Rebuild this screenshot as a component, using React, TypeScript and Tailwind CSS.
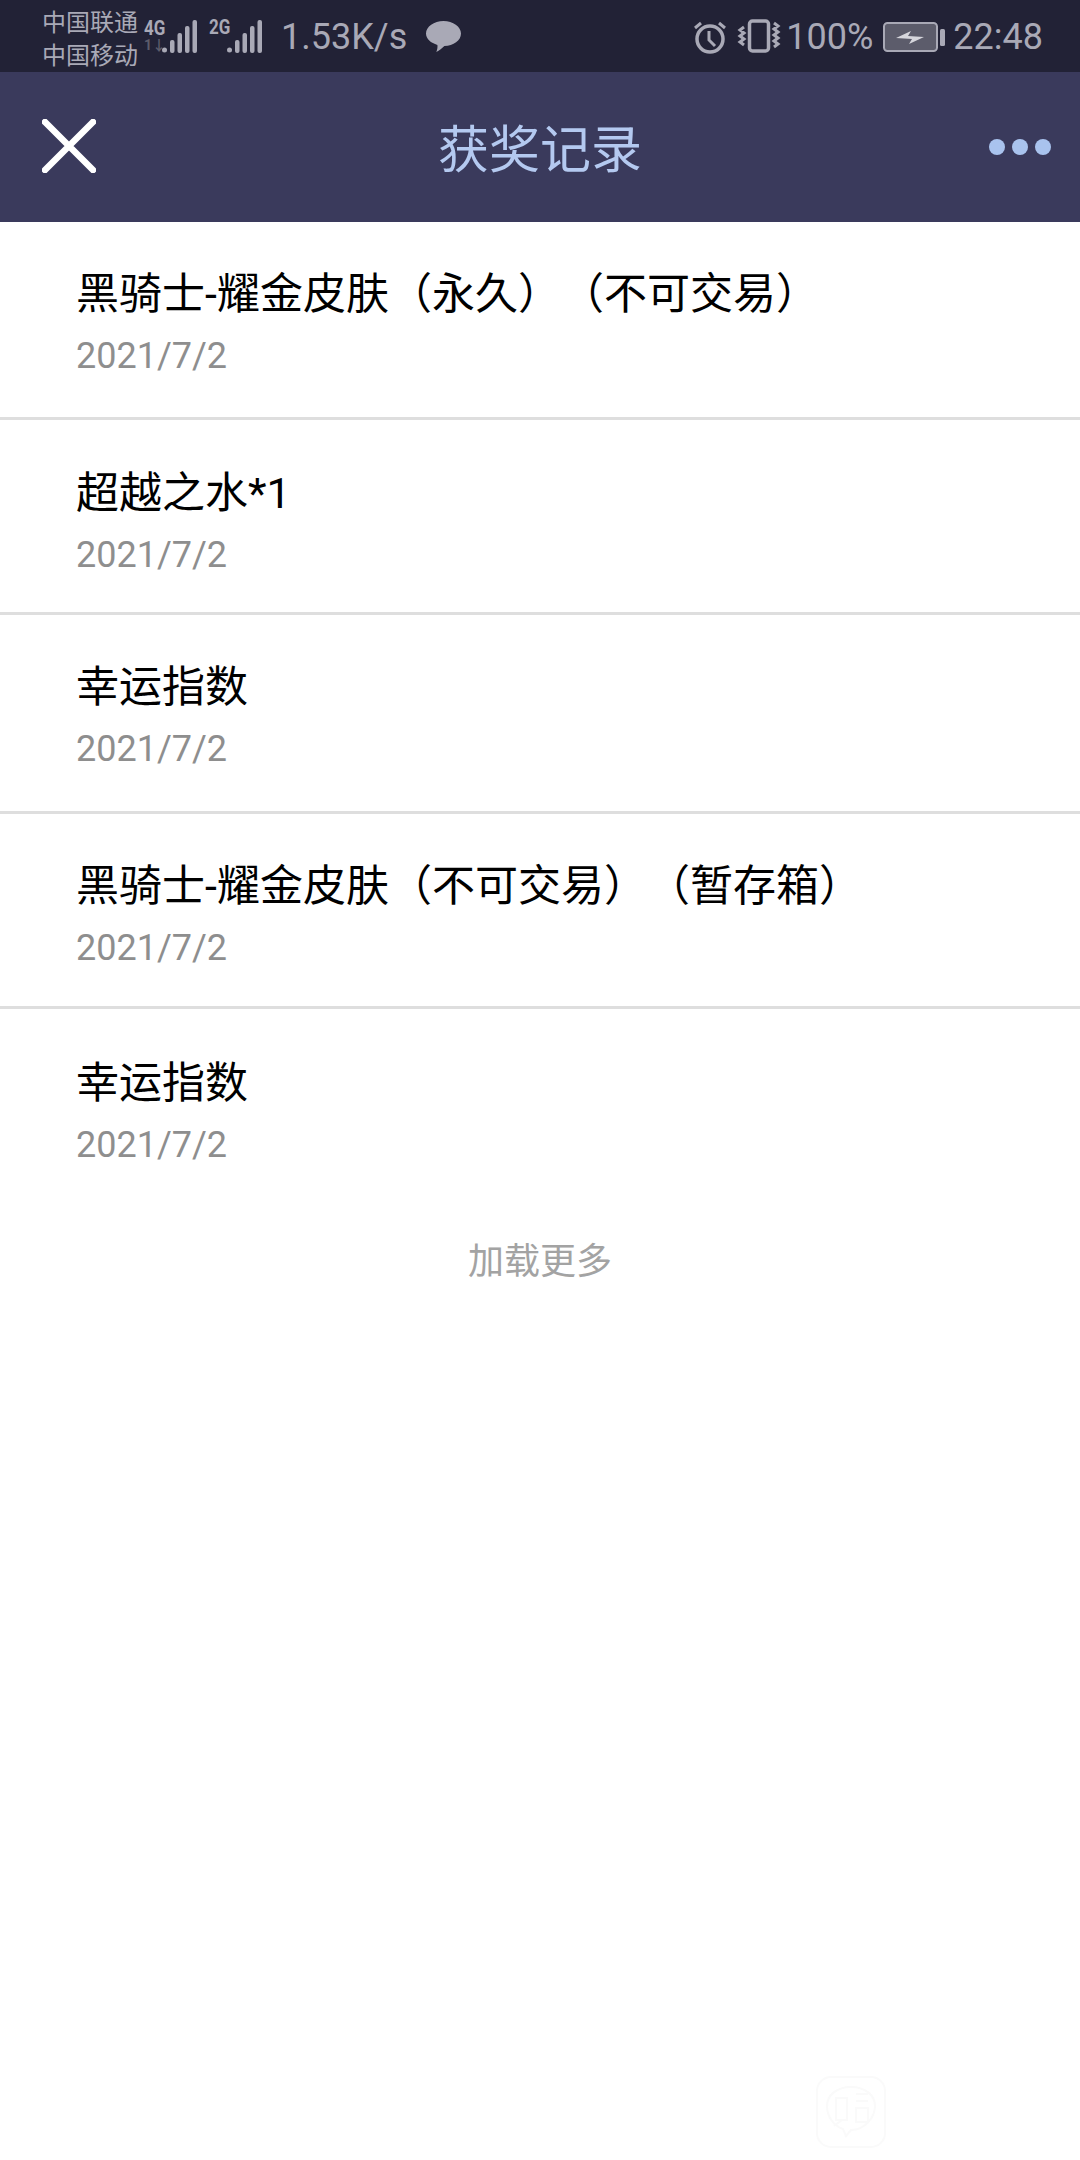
import React from "react";

const records = [
  { title: "黑骑士-耀金皮肤（永久）（不可交易）", rowClass: "h-[198px] pt-[46px]" },
  { title: "超越之水*1", rowClass: "h-[195px] pt-[47px]" },
  { title: "幸运指数", rowClass: "h-[199px] pt-[46px]" },
  { title: "黑骑士-耀金皮肤（不可交易）（暂存箱）", rowClass: "h-[195px] pt-[46px]" },
];

const SignalBars = () => (
  <svg width="35" height="33" viewBox="0 0 35 33" className="block">
    <circle cx="2.5" cy="30" r="2.5" fill="#a9a9b6" />
    <rect x="8" y="20" width="4.5" height="13" rx="2" fill="#a9a9b6" />
    <rect x="15.5" y="13" width="4.5" height="20" rx="2" fill="#a9a9b6" />
    <rect x="23" y="6" width="4.5" height="27" rx="2" fill="#a9a9b6" />
    <rect x="30.5" y="0" width="4.5" height="33" rx="2" fill="#a9a9b6" />
  </svg>
);

const StatusBar = () => (
  <div className="h-[72px] bg-[#222236] flex items-center justify-between pl-[42px] pr-[37px] text-[#a9a9b6] font-['Roboto','Noto_Sans_CJK_SC',sans-serif]">
    <div className="flex items-center">
      <div className="flex flex-col w-[96px] text-[24px] leading-[33px] font-['Noto_Sans_CJK_SC',sans-serif] pt-[2px]">
        <span>中国联通</span>
        <span>中国移动</span>
      </div>
      <div className="relative flex items-end w-[53px] h-[34px] ml-[6px] mt-[-1px] justify-end">
        <span className="absolute left-0 top-[-2px] text-[20px] leading-[22px] font-bold font-['Roboto',sans-serif] scale-x-[0.85] origin-left">4G</span>
        <span className="absolute left-0 bottom-0 text-[14px] leading-[16px] font-bold text-[#5c5c6b]">1↓</span>
        <SignalBars />
      </div>
      <div className="relative flex items-end w-[53px] h-[34px] ml-[12px] mt-[-1px] justify-end">
        <span className="absolute left-0 top-[-3px] text-[20px] leading-[22px] font-bold font-['Roboto',sans-serif] scale-x-[0.85] origin-left">2G</span>
        <SignalBars />
      </div>
      <span className="ml-[19px] mt-[2px] text-[36px] leading-none">1.53K/s</span>
      <svg width="35" height="32" viewBox="0 0 35 32" className="ml-[19px] mt-[2px]">
        <path d="M17.5 0C27 0 35 5.6 35 12.6c0 7-7.6 12.4-16.6 12.4-2 1.9-5.1 4.7-8.1 5.9 1-2.2 1.4-4.4 1.1-6.9C5 22.2 0 17.9 0 12.6 0 5.6 8 0 17.5 0Z" fill="#a9a9b6" />
      </svg>
    </div>
    <div className="flex items-center">
      <svg width="34" height="34" viewBox="0 0 34 34" fill="none" stroke="#a9a9b6" className="mt-[1px]">
        <circle cx="17" cy="19" r="13" strokeWidth="3.5" />
        <path d="M16 11v9l6 6" strokeWidth="3" />
        <path d="M2 8l6-5M32 8l-6-5" strokeWidth="3" />
      </svg>
      <svg width="44" height="34" viewBox="0 0 44 34" fill="none" stroke="#a9a9b6" className="ml-[10px]">
        <rect x="12.5" y="2" width="19" height="30" rx="3" strokeWidth="3.5" />
        <path d="M7 8l-4 3 4 3-4 3 4 3-4 3 4 3M37 4l4 3-4 3 4 3-4 3 4 3-4 3 4 3-4 3" strokeWidth="3" />
      </svg>
      <span className="ml-[5px] mt-[2px] text-[36px] leading-none">100%</span>
      <svg width="62" height="30" viewBox="0 0 62 30" className="ml-[10px] mt-[2px]">
        <rect x="1" y="1" width="53" height="28" rx="3.5" fill="#5c5c6b" stroke="#a9a9b6" strokeWidth="2" />
        <path d="M13 16l15-7-3 5 16 1-15 7 3-5Z" fill="#d6d6dc" />
        <rect x="57" y="7" width="5" height="17" rx="1.5" fill="#a9a9b6" />
      </svg>
      <span className="ml-[8px] mt-[2px] text-[36px] leading-none">22:48</span>
    </div>
  </div>
);

const Header = () => (
  <div className="relative h-[150px] bg-[#3a3a5c] flex items-center justify-center">
    <svg width="54" height="54" viewBox="0 0 54 54" className="absolute left-[42px] top-[47px]">
      <path d="M3 3l48 48M51 3L3 51" stroke="#fff" strokeWidth="6.5" strokeLinecap="round" />
    </svg>
    <span className="text-[51px] leading-none text-[#b4c9f0] font-['Noto_Sans_CJK_SC',sans-serif] mt-[-2px]">获奖记录</span>
    <div className="absolute right-[29px] top-[67px] flex gap-[7px]">
      <span className="w-[16px] h-[16px] rounded-full bg-[#a9c3ee]" />
      <span className="w-[16px] h-[16px] rounded-full bg-[#a9c3ee]" />
      <span className="w-[16px] h-[16px] rounded-full bg-[#a9c3ee]" />
    </div>
  </div>
);

const RecordText = ({ title }: { title: string }) => (
  <>
    <div className="text-[43px] leading-[52px] text-black [text-spacing-trim:space-all] font-['Roboto','Noto_Sans_CJK_SC',sans-serif]">{title}</div>
    <div className="mt-[15px] text-[36px] leading-[42px] text-[#8e8e8e] font-['Roboto',sans-serif]">2021/7/2</div>
  </>
);

export default function App() {
  return (
    <div className="relative w-[1080px] h-[2160px] bg-white overflow-hidden">
      <StatusBar />
      <Header />
      <div>
        {records.map((record, i) => (
          <div key={i} className={`pl-[76px] border-b-[3px] border-[#dedede] ${record.rowClass}`}>
            <RecordText title={record.title} />
          </div>
        ))}
        <div className="pl-[76px] pt-[48px]">
          <RecordText title="幸运指数" />
        </div>
      </div>
      <div className="mt-[66px] text-center text-[36px] leading-[52px] text-[#a3a3a3] font-['Noto_Sans_CJK_SC',sans-serif]">加载更多</div>
      {/* faint watermark */}
      <svg width="70" height="74" viewBox="0 0 70 74" fill="none" stroke="#fafafa" strokeWidth="2" className="absolute left-[816px] top-[2076px]">
        <rect x="1" y="1" width="68" height="70" rx="14" />
        <path d="M11 30c0-11 10-19 24-19s24 8 24 19-10 24-24 24l-5 6-3-7C18 50 11 41 11 30Z" />
        <path d="M20 22h11v22H20ZM26 44l-8 6M40 18h12M40 25h12M40 32h12v14H40Z" />
      </svg>
    </div>
  );
}
